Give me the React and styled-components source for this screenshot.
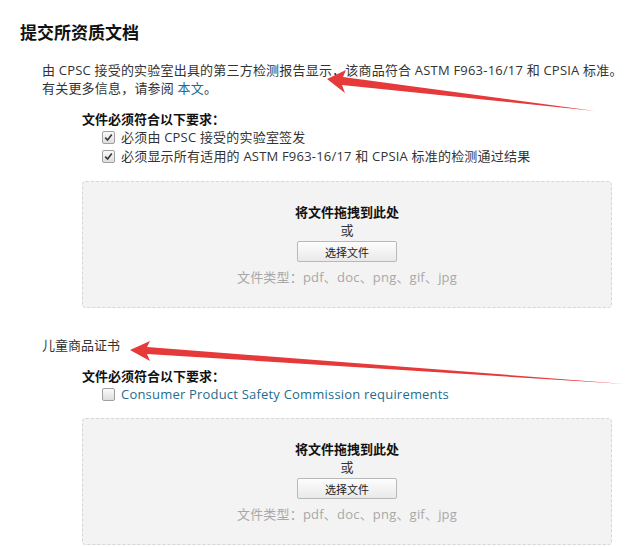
import React from "react";
import styled, { createGlobalStyle } from "styled-components";

const GlobalStyle = createGlobalStyle`
  html, body {
    margin: 0;
    padding: 0;
    background: #fff;
  }
  body {
    font-family: "Open Sans", "Noto Sans CJK SC", sans-serif;
    font-size: 13px;
    color: #333;
  }
`;

const Page = styled.div`
  position: relative;
  width: 625px;
  height: 547px;
  overflow: hidden;
  padding: 22px 0 0 20px;
  box-sizing: border-box;
`;

const Title = styled.h2`
  margin: 0;
  font-size: 17px;
  line-height: 22px;
  font-weight: 700;
  color: #111;
`;

const Section = styled.div`
  padding-left: 22px;
  margin-top: ${(p) => p.$top}px;
`;

const Intro = styled.p`
  margin: 0;
  line-height: 18px;
  white-space: nowrap;
  letter-spacing: 0.2px;
  color: #333;
`;

const Link = styled.a`
  color: #1f6c8f;
  text-decoration: none;
`;

const Requirements = styled.div`
  padding-left: 40px;
  margin-top: ${(p) => p.$top}px;
`;

const ReqTitle = styled.div`
  font-weight: 700;
  color: #111;
  line-height: 18px;
`;

const ReqList = styled.ul`
  list-style: none;
  margin: 0;
  padding: 0 0 0 20px;
`;

const ReqItem = styled.li`
  display: flex;
  align-items: center;
  gap: 6px;
  line-height: 19px;
  letter-spacing: 0.2px;
  color: ${(p) => (p.$link ? "#1f6c8f" : "#333")};
`;

const Box = styled.span`
  width: 11px;
  height: 11px;
  border: 1px solid #a0a0a0;
  border-radius: 2px;
  background: linear-gradient(#fafafa, #dedede);
  display: inline-flex;
  align-items: center;
  justify-content: center;
  flex: none;
`;

const DropZone = styled.div`
  margin-top: ${(p) => p.$top}px;
  width: 530px;
  height: 127px;
  box-sizing: border-box;
  border: 1px dashed #d6d6d6;
  border-radius: 4px;
  background: #f3f3f3;
  display: flex;
  flex-direction: column;
  align-items: center;
  padding-top: 21px;
`;

const DropTitle = styled.div`
  font-weight: 700;
  color: #111;
  line-height: 18px;
`;

const Or = styled.div`
  line-height: 19px;
  color: #333;
`;

const PickButton = styled.button`
  width: 100px;
  height: 21px;
  border: 1px solid #b8b8b8;
  border-radius: 2px;
  background: linear-gradient(#fdfdfd, #e9e9e9);
  font-family: inherit;
  font-size: 11px;
  color: #222;
  padding: 0;
  margin-top: 1px;
`;

const Types = styled.div`
  margin-top: 6px;
  color: #a8a8a8;
  line-height: 18px;
  letter-spacing: 0.2px;
`;

const Label = styled.div`
  line-height: 18px;
  color: #333;
`;

const Arrows = styled.svg`
  position: absolute;
  left: 0;
  top: 0;
  pointer-events: none;
`;

const Check = () => (
  <svg width="9" height="9" viewBox="0 0 9 9">
    <path d="M1.2 4.6 L3.6 7 L7.8 1.6" fill="none" stroke="#3a3a3a" strokeWidth="1.6" />
  </svg>
);

const Upload = ({ top }) => (
  <DropZone $top={top}>
    <DropTitle>将文件拖拽到此处</DropTitle>
    <Or>或</Or>
    <PickButton>选择文件</PickButton>
    <Types>文件类型：pdf、doc、png、gif、jpg</Types>
  </DropZone>
);

export default function App() {
  return (
    <>
      <GlobalStyle />
      <Page>
        <Title>提交所资质文档</Title>
        <Section $top={17}>
          <Intro>
            由 CPSC 接受的实验室出具的第三方检测报告显示，该商品符合 ASTM F963-16/17 和 CPSIA 标准。
            <br />
            有关更多信息，请参阅 <Link href="#">本文</Link>。
          </Intro>
          <Requirements $top={13}>
            <ReqTitle>文件必须符合以下要求：</ReqTitle>
            <ReqList>
              <ReqItem>
                <Box><Check /></Box>必须由 CPSC 接受的实验室签发
              </ReqItem>
              <ReqItem>
                <Box><Check /></Box>必须显示所有适用的 ASTM F963-16/17 和 CPSIA 标准的检测通过结果
              </ReqItem>
            </ReqList>
            <Upload top={15} />
          </Requirements>
        </Section>
        <Section $top={28}>
          <Label>儿童商品证书</Label>
          <Requirements $top={13}>
            <ReqTitle>文件必须符合以下要求：</ReqTitle>
            <ReqList>
              <ReqItem $link>
                <Box />Consumer Product Safety Commission requirements
              </ReqItem>
            </ReqList>
            <Upload top={14} />
          </Requirements>
        </Section>
        <Arrows width="625" height="547" viewBox="0 0 625 547">
          <path
            d="M327 79 L346 70 L343 77 L595 111 L342 85 L345 93 Z"
            fill="#e5393a"
          />
          <path
            d="M130 350 L150 341 L147 347 L625 384 L147 354 L150 361 Z"
            fill="#e5393a"
          />
        </Arrows>
      </Page>
    </>
  );
}
